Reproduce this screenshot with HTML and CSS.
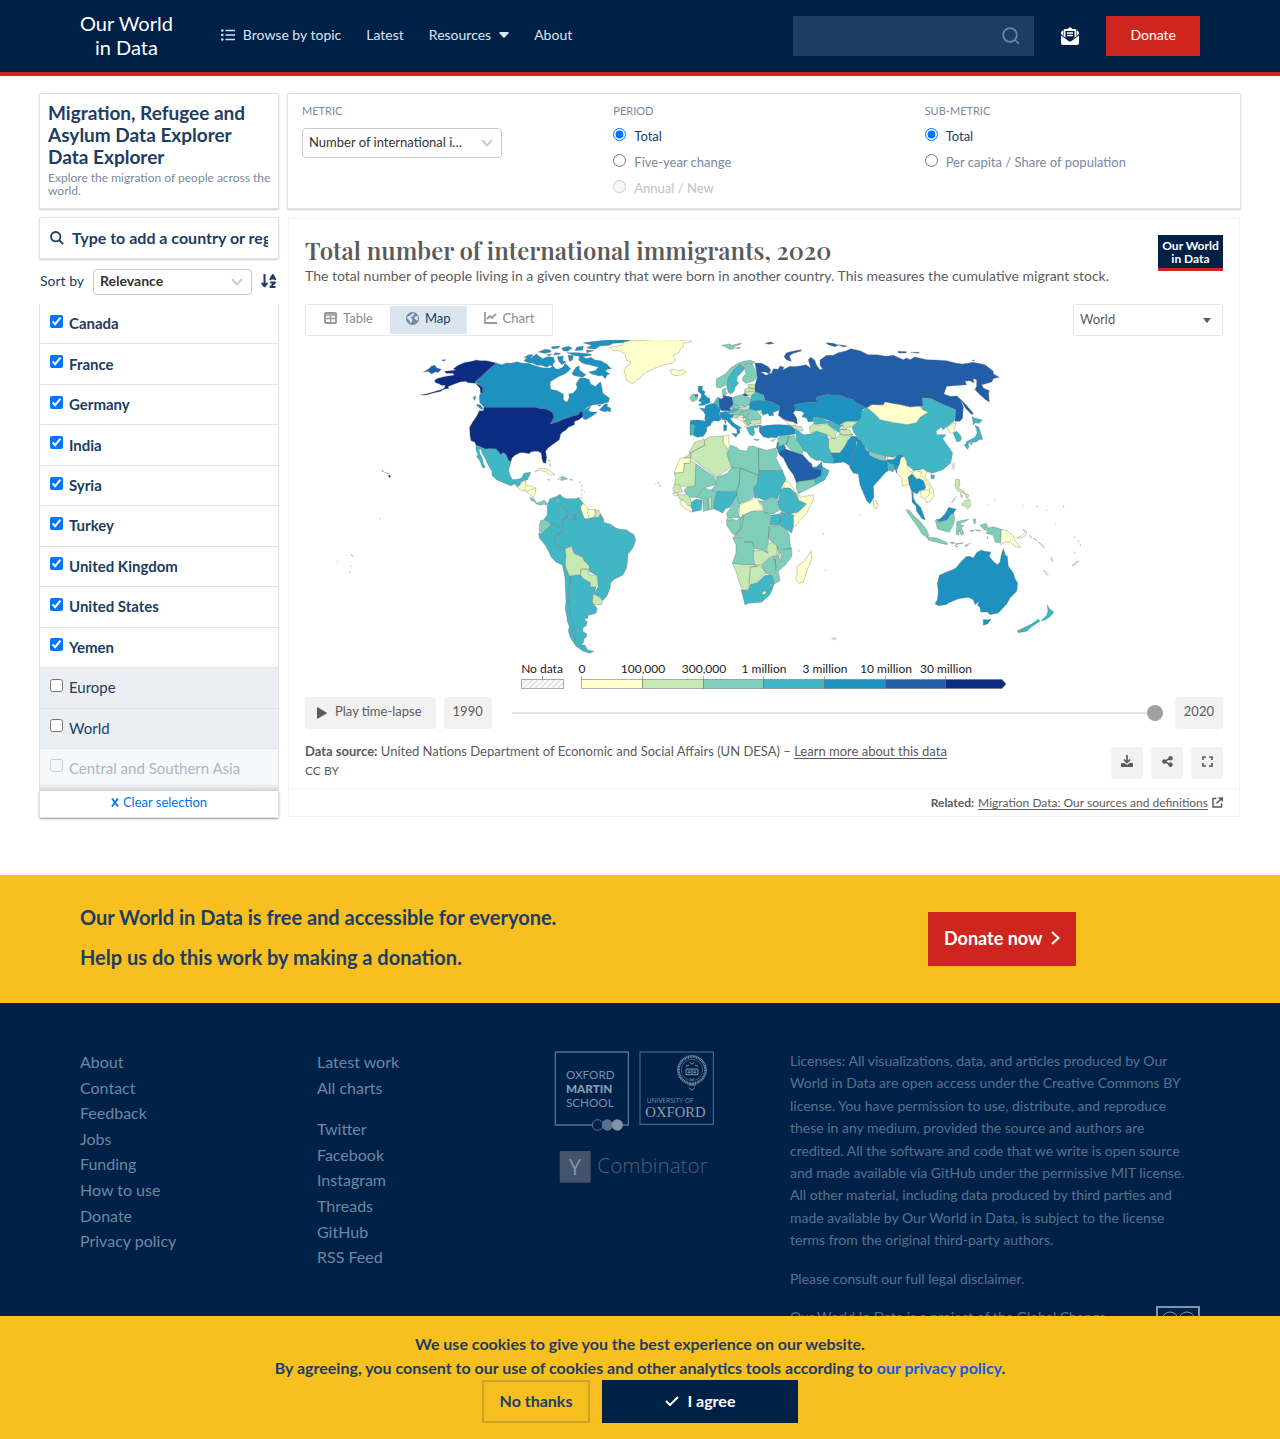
FILE: index.html
```html
<!DOCTYPE html>
<html lang="en">
<head>
<meta charset="utf-8">
<meta name="viewport" content="width=device-width, initial-scale=1">
<title>Migration, Refugee and Asylum Data Explorer - Our World in Data</title>
<link rel="stylesheet" href="styles.css">
</head>
<body>
<header class="site-header">
  <a class="logo" href="#">Our World<br>in Data</a>
  <nav class="site-nav">
    <a href="#"><svg class="ic-list" viewBox="0 0 14 12" width="14" height="12"><g fill="none" stroke="currentColor" stroke-width="2"><path d="M4.500 1.500H14M4.500 6H14M4.500 10.500H14" stroke-width="1.700"/></g><g fill="currentColor"><circle cx="1.300" cy="1.500" r="1.300"/><circle cx="1.300" cy="6" r="1.300"/><circle cx="1.300" cy="10.500" r="1.300"/></g></svg>Browse by topic</a>
    <a href="#">Latest</a>
    <a href="#">Resources<svg class="ic-caret" viewBox="0 0 10 6" width="10" height="6"><path fill="currentColor" d="M1 0H9Q10 .4 9.500 1.200L5.600 5.500Q5 6 4.400 5.500L.5 1.200Q0 .4 1 0Z"/></svg></a>
    <a href="#">About</a>
  </nav>
  <form class="site-search">
    <input type="search" aria-label="Search">
    <svg viewBox="0 0 18 18" width="18" height="18" fill="none" stroke="#6e87a2" stroke-width="1.700"><circle cx="8" cy="8" r="6.800"/><path d="M13 13L17 17"/></svg>
  </form>
  <a class="mail" href="#" aria-label="Newsletter"><svg viewBox="0 0 18 18" width="18" height="18"><path fill="#fff" d="M0 8.500V16Q0 18 2 18H16Q18 18 18 16V8.500L10.500 14Q9 15 7.500 14ZM0 7V6Q0 5 1 4.300L2 3.600V8.500ZM18 7V6Q18 5 17 4.300L16 3.600V8.500ZM2.500 9.200V3.500Q2.500 2 4 2H6.500L9 0L11.500 2H14Q15.500 2 15.500 3.500V9.200L13.500 10.700V4H4.500V10.700Z"/><path stroke="#fff" stroke-width="1.300" d="M6 6H12M6 8.500H12"/></svg></a>
  <a class="donate" href="#">Donate</a>
</header>

<main class="explorer">
  <section class="card heading">
    <h1>Migration, Refugee and Asylum Data Explorer<br>Data Explorer</h1>
    <p>Explore the migration of people across the world.</p>
  </section>

  <section class="card controls">
    <div>
      <label class="cap" for="metric">METRIC</label>
      <span class="select metric"><select id="metric"><option>Number of international immigrants</option></select><svg viewBox="0 0 12 8" width="12" height="8"><path d="M1 1L6 6.500L11 1" fill="none" stroke="#ccc" stroke-width="2"/></svg></span>
    </div>
    <fieldset>
      <legend class="cap">PERIOD</legend>
      <label class="on"><input type="radio" name="period" checked>Total</label>
      <label><input type="radio" name="period">Five-year change</label>
      <label class="off"><input type="radio" name="period" disabled>Annual / New</label>
    </fieldset>
    <fieldset>
      <legend class="cap">SUB-METRIC</legend>
      <label class="on"><input type="radio" name="sub" checked>Total</label>
      <label><input type="radio" name="sub">Per capita / Share of population</label>
    </fieldset>
  </section>

  <aside class="picker">
    <div class="card find">
      <svg viewBox="0 0 14 14" width="14" height="14" fill="none" stroke="#1d3d63" stroke-width="1.800"><circle cx="5.700" cy="5.700" r="4.700"/><path d="M9 9L13.200 13.200"/></svg>
      <input type="text" aria-label="Add a country or region" placeholder="Type to add a country or region...">
    </div>
    <div class="sort">
      <label for="sort">Sort by</label>
      <span class="select relevance"><select id="sort"><option>Relevance</option></select><svg viewBox="0 0 12 8" width="12" height="8"><path d="M1 1L6 6.500L11 1" fill="none" stroke="#ccc" stroke-width="2"/></svg></span>
      <button class="order" aria-label="Sort order"><svg viewBox="0 0 16 14" width="16" height="14" fill="none" stroke="#1d3d63" stroke-width="2" stroke-linejoin="round"><path d="M3.500 0V12M.6 9L3.500 12.300L6.400 9"/><path d="M9 6L11.800 1L14.600 6M10 4.500H13.600"/><path d="M9.200 8.500H14L9.500 13H14.500"/></svg></button>
    </div>
    <ul class="entities">
      <li><label><input type="checkbox" checked>Canada</label></li>
      <li><label><input type="checkbox" checked>France</label></li>
      <li><label><input type="checkbox" checked>Germany</label></li>
      <li><label><input type="checkbox" checked>India</label></li>
      <li><label><input type="checkbox" checked>Syria</label></li>
      <li><label><input type="checkbox" checked>Turkey</label></li>
      <li><label><input type="checkbox" checked>United Kingdom</label></li>
      <li><label><input type="checkbox" checked>United States</label></li>
      <li><label><input type="checkbox" checked>Yemen</label></li>
      <li class="out"><label><input type="checkbox">Europe</label></li>
      <li class="out"><label><input type="checkbox">World</label></li>
      <li class="out faded"><label><input type="checkbox" disabled>Central and Southern Asia</label></li>
    </ul>
    <button class="clear"><svg viewBox="0 0 8 9" width="8" height="9"><path d="M1 .5L7 8.500M7 .5L1 8.500" stroke="currentColor" stroke-width="1.800"/></svg>Clear selection</button>
  </aside>

  <section class="chart">
    <div class="chart-body">
      <div class="chart-head">
        <div>
          <h2>Total number of international immigrants, 2020</h2>
          <p>The total number of people living in a given country that were born in another country. This measures the cumulative migrant stock.</p>
        </div>
        <a class="mini-logo" href="#">Our World<br>in Data</a>
      </div>
      <div class="bar">
        <div class="tabs">
          <button><svg viewBox="0 0 13 12" width="13" height="12"><rect x="1" y="1" width="11" height="10" rx="1" fill="none" stroke="#999" stroke-width="2"/><path d="M1 3H12M1 6.500H12M6.500 3V11" stroke="#999" stroke-width="1.500"/></svg>Table</button>
          <button class="active"><svg viewBox="0 0 14 14" width="13" height="13"><circle cx="7" cy="7" r="7" fill="#6e87a2"/><path fill="#dbe5f0" d="M1.500 4.500L4 4L7 2L6.500 1L9 1.500L8 4L6 5.500L4.500 6L6.500 7L7 9L5.500 11.500L4.500 12L4 9.500L1.500 7ZM9.500 5L12 4L13 7L12 9.500L10.500 8L9 7.500Z"/></svg>Map</button>
          <button><svg viewBox="0 0 13 12" width="13" height="12" fill="none" stroke="#999" stroke-width="1.800"><path d="M1 0V11H13"/><path d="M3 7L6 4L8 6L12 2"/></svg>Chart</button>
        </div>
        <span class="select world"><select aria-label="Region"><option>World</option></select><svg viewBox="0 0 8 5" width="8" height="5"><path d="M0 0H8L4 5Z" fill="#5b5b5b"/></svg></span>
      </div>

      <svg class="map" viewBox="305 340 918 352" role="img" aria-label="World map of international immigrants">
        <defs>
          <pattern id="hatch" width="4" height="4" patternUnits="userSpaceOnUse" patternTransform="rotate(45)"><rect width="4" height="4" fill="#fff"/><path d="M1 0V4" stroke="#ccc"/></pattern>
          <clipPath id="frame"><rect x="305" y="340" width="918" height="320"/></clipPath>
        </defs>
        <g clip-path="url(#frame)" class="land">
          <g transform="translate(320 338) scale(.3333)">
            <path class="c5" d="M310 102L325 94L335 84L345 82L350 90L364 94L355 103L345 102L335 108L325 100ZM365 66L378 65L372 69Z"/>
            <path class="c4" d="M528 75L545 80L560 75L575 76L592 71L606 76L625 76L640 82L660 88L672 90L690 90L700 84L706 92L715 94L728 88L736 76L744 84L752 92L745 100L738 106L725 112L715 116L705 122L692 130L690 138L692 154L712 158L722 164L730 168L730 184L736 192L744 190L748 176L746 168L758 166L768 156L772 148L768 138L776 126L780 120L795 120L808 125L812 138L820 142L826 146L836 136L842 132L846 150L848 165L860 174L868 180L866 192L845 198L820 200L804 206L790 218L800 212L812 204L806 218L815 222L832 222L820 232L798 245L790 242L789 225L785 222L775 230L760 234L735 242L712 252L690 258L697 248L702 236L698 224L682 214L660 212L648 208L492 208L484 198L480 195L478 180L480 168L488 164L486 150L480 142L465 132Z"/>
            <path class="c4" d="M838 215L846 208L854 198L862 198L862 206L872 210L872 222L862 218L855 222ZM780 52L800 62L812 58L825 66L842 68L860 78L874 92L862 94L856 100L870 108L862 110L856 122L846 112L838 114L815 108L806 102L825 98L835 88L815 82L795 78L786 74L776 66ZM612 68L622 58L632 60L650 48L656 54L668 62L682 56L700 58L705 70L698 80L700 86L690 82L680 88L665 82L650 82L640 76L625 74ZM612 58L628 50L640 50L630 60ZM655 42L675 34L690 36L694 42L675 46ZM712 56L730 54L728 68L738 72L726 80L716 70ZM744 52L760 52L758 66L748 70ZM694 26L720 24L715 30L698 33ZM725 30L745 25L757 30L742 40L730 38ZM740 44L772 44L812 48L815 52L785 56L762 52ZM770 28L790 24L788 36L765 38ZM790 14L826 10L866 6L932 6L910 14L880 16L868 22L840 24L825 34L800 30L815 22ZM800 36L822 38L800 44ZM756 106L768 88L778 84L778 96L798 110L788 118L768 114L760 112ZM832 200L845 202L838 205ZM468 200L480 200L490 212L484 214L476 208ZM460 178L468 174L464 188ZM705 44L722 46L716 50L700 50ZM680 50L695 48L688 54Z"/>
            <path class="c6" d="M492 208L648 208L660 212L682 214L698 224L702 236L697 248L690 258L712 252L735 242L760 234L775 230L780 222L788 222L789 236L775 246L764 250L763 260L745 268L738 276L728 282L722 288L718 305L700 318L684 330L677 340L680 358L677 376L670 374L666 362L664 346L655 340L642 340L632 342L628 347L612 344L600 344L585 352L576 360L572 372L564 366L558 350L550 344L542 350L536 342L528 334L510 332L495 333L480 326L468 322L464 312L453 308L450 292L449 268L458 252L470 235L478 218L490 218Z"/>
            <path class="c6" d="M528 75L500 68L480 68L470 66L455 70L432 74L415 82L400 92L407 96L392 98L374 100L378 106L400 106L402 112L385 114L372 116L350 122L344 128L345 133L358 138L364 142L376 142L374 148L368 154L352 158L340 162L318 168L302 171L318 171L340 165L362 160L375 152L386 152L384 146L398 140L420 132L436 130L445 134L465 136L480 142L488 150L488 164L482 166L480 150L470 140L465 132ZM186 398L190 398L189 401ZM196 402L199 403L197 404ZM202 405L206 407L203 408ZM206 411L210 411L212 416L207 419Z"/>
            <path class="c0" d="M870 28L905 22L912 12L930 8L960 8L1000 5L1110 6L1115 12L1090 16L1090 26L1080 35L1078 44L1062 50L1060 58L1066 66L1056 76L1040 78L1010 88L990 98L965 112L960 122L950 124L942 136L932 135L920 128L916 110L912 100L918 86L930 80L932 70L920 68L916 50L900 38L880 38Z"/>
            <path class="c3" d="M468 322L480 326L495 333L510 332L528 332L536 342L542 350L550 344L558 350L566 368L573 374L568 388L566 398L570 412L578 425L592 424L605 420L612 406L632 403L628 414L622 426L608 428L602 432L600 440L592 446L584 438L572 443L550 434L530 425L516 412L516 400L505 382L498 366L486 346L484 334L477 334L480 348L488 362L490 376L496 388L488 390L482 374L476 362L470 358L474 348L468 338Z"/>
            <path class="c0" d="M592 448L602 442L606 430L618 430L616 442L640 446L648 450L645 470L640 478L630 470L618 460L612 458L600 456ZM612 446L618 450L612 458M618 460L626 458L648 450M644 402L655 392L668 391L682 394L705 410L692 412L678 402L660 396ZM682 424L690 425L686 428ZM714 425L724 426L724 418L718 417ZM684 366L692 368L688 370ZM690 376L692 386L688 380Z"/>
            <path class="c2" d="M630 478L642 482L650 494L662 492L672 486L682 496L678 502L672 498L660 502L648 497L642 490L634 488ZM724 416L732 416L743 423L730 426L724 428ZM750 424L758 425L754 428Z"/>
            <path class="c3" d="M720 468L714 478L712 488L716 498L728 506L742 512L740 530L742 540L728 545L730 560L728 572L718 570L710 562L692 556L680 548L672 545L682 530L682 500L690 482L708 476Z"/>
            <path class="c3" d="M714 478L722 470L728 478L740 482L765 482L776 480L790 495L782 504L785 522L765 530L765 545L752 548L742 540L740 530L742 512L728 506L716 498Z"/>
            <path class="c0" d="M790 495L802 508L804 514L825 515L824 538L806 542L795 544L790 535L786 525L782 508ZM804 514L802 526L808 542M776 478L786 480L780 486Z"/>
            <path class="c1" d="M825 515L836 516L842 528L834 540L824 538L828 526Z"/>
            <path class="c2" d="M662 548L672 545L692 556L690 566L676 576L668 587L658 580L658 562Z"/>
            <path class="c3" d="M692 556L710 562L718 570L728 572L726 585L708 590L704 608L712 624L735 632L738 650L736 678L728 682L708 672L694 658L686 640L676 622L658 600L656 585L668 587L676 576L690 566Z"/>
            <path class="c3" d="M728 545L742 540L752 548L765 545L765 530L785 522L790 535L795 544L806 542L824 538L834 540L842 528L852 546L850 553L870 558L888 570L900 574L918 575L942 590L947 606L940 628L924 648L922 672L920 690L908 712L885 722L872 734L870 752L860 775L848 788L840 778L822 768L835 745L832 714L808 700L808 684L792 668L788 657L762 645L755 625L735 632L712 624L704 608L708 590L726 585L728 572L730 560Z"/>
            <path class="c3" d="M750 714L780 710L800 726L812 734L810 746L828 748L822 768L817 792L824 802L832 812L828 826L804 832L804 840L793 843L802 852L798 864L790 868L788 880L800 888L800 896L792 902L790 914L785 920L796 924L780 925L765 905L764 880L755 850L750 820L746 780L745 760L750 735Z"/>
            <path class="c3" d="M728 682L736 678L742 700L750 714L750 735L745 760L746 780L750 820L755 850L764 880L765 905L780 925L795 922L803 936L822 940L810 946L790 940L768 925L752 900L745 880L748 866L742 850L740 830L736 815L738 790L735 720Z"/>
            <path class="c1" d="M735 632L755 625L762 648L788 657L792 668L808 684L806 694L785 692L780 710L755 712L748 714L738 690L736 678L738 650ZM782 694L806 694L808 710L830 712L834 735L828 748L810 746L812 734L790 722L782 712ZM819 768L835 776L848 788L845 800L825 800L817 792Z"/>
            <path class="isle" d="M178 541h4v2h-4zM52 669h2v3h-2zM93 650h4v3h-4zM98 653h3v3h-3zM88 703l4-1v4zM92 685h2v2h-2zM778 431h4v2h-4zM784 442h2v4h-2zM785 453l3 3-4 3zM792 460h2v3h-2zM784 468l4 2-4 2z"/>
          </g>

          <g transform="translate(640 338) scale(.3333)">
            <path class="c5" d="M345 75L365 76L385 86L392 96L388 108L376 102L362 102L378 112L395 105L400 92L415 94L420 84L432 88L428 96L450 85L460 86L480 84L498 80L512 90L505 65L512 58L524 66L530 82L540 95L548 92L540 82L540 66L560 52L580 52L595 44L620 38L632 32L660 38L685 50L710 50L740 55L760 52L790 65L800 60L810 65L824 57L860 65L885 66L920 68L950 76L968 78L1000 73L1035 80L1045 88L1060 100L1060 108L1078 118L1066 120L1060 122L1055 132L1042 136L1025 140L1030 150L1048 158L1046 166L1048 192L1035 184L1020 170L1005 155L1010 145L1010 125L1000 122L1002 135L990 128L975 130L980 140L920 145L912 168L930 175L952 174L960 185L970 205L968 240L960 250L945 250L945 240L947 215L922 205L900 195L875 182L848 180L850 205L810 207L780 200L760 200L735 192L730 200L695 200L680 210L650 195L640 185L620 180L600 172L560 170L528 178L532 192L490 195L462 200L468 215L460 225L470 240L472 258L455 252L430 244L415 232L420 205L395 192L375 187L370 170L345 163L345 142L352 118Z"/>
            <path class="c5" d="M432 55L440 44L465 38L485 35L482 40L460 46L448 54L454 70L440 66ZM948 174L962 184L978 200L1000 226L996 230L978 212L968 196ZM375 16L392 12L402 16L388 19ZM558 14L580 16L595 22L585 26L565 20ZM594 20L622 24L610 27ZM774 40L800 41L798 45L776 45ZM812 43L838 43L835 46ZM306 172L315 165L325 172L315 176ZM996 67L1004 66L1002 69Z"/>
            <path class="c2" d="M228 140L230 122L246 114L258 106L272 90L290 78L310 70L330 67L345 72L336 78L322 76L312 82L298 80L285 92L272 110L265 122L262 138L255 142L240 150L230 148ZM245 22L270 18L275 22L305 15L300 20L285 24L280 34L268 34L258 28ZM285 30L302 28L298 32Z"/>
            <path class="c3" d="M264 162L260 145L265 120L275 105L285 92L298 80L310 84L314 92L304 104L292 116L290 128L296 136L285 148L282 160L272 168Z"/>
            <path class="c2" d="M312 82L322 76L336 78L343 90L352 118L340 130L318 136L308 128L308 118L318 108L314 92ZM152 185L150 178L158 168L172 170L172 184L158 192ZM246 164L248 154L258 150L256 160L262 168L250 172Z"/>
            <path class="c4" d="M175 145L188 144L186 155L196 162L192 168L202 178L210 182L210 194L190 202L174 202L186 194L176 188L184 176L184 168L174 160ZM164 170L172 168L174 176L166 176Z"/>
            <path class="c4" d="M178 210L195 212L196 204L210 198L225 196L242 212L238 228L240 238L244 244L235 250L222 248L214 254L198 250L194 244L196 230L190 220ZM152 247L175 246L198 250L214 254L212 262L200 268L200 280L190 295L172 298L160 292L164 262L150 258Z"/>
            <path class="c3" d="M150 258L166 260L162 290L150 292ZM222 195L232 178L240 180L238 205L228 198ZM260 222L275 212L295 210L295 222L265 226ZM320 270L335 264L356 262L354 268L340 270L345 285L338 295L328 288ZM340 303L358 305L350 308ZM330 185L336 170L350 162L368 170L374 185L355 192L332 190Z"/>
            <path class="c5" d="M237 184L250 180L248 172L276 178L280 200L270 210L272 218L245 218L238 208Z"/>
            <path class="c2" d="M278 178L305 170L328 178L330 200L315 206L290 202L280 198ZM272 206L284 200L302 208L296 214L276 210ZM276 226L296 214L322 216L330 212L350 218L364 236L362 246L335 246L322 250L318 240L310 234L300 232L280 232ZM296 232L304 222L326 216M318 240L324 228L332 222"/>
            <path class="c1" d="M324 140L345 138L345 150L338 152L326 150ZM314 154L326 150L345 152L345 162L338 170L330 174L314 166ZM314 162L342 160M298 208L322 206L328 212L310 216ZM330 248L362 244L364 256L340 260L332 256ZM354 214L366 216L364 228ZM278 232L296 230L296 236L284 238L290 244ZM392 308L406 303L402 310Z"/>
            <path class="c0" d="M288 238L308 238L312 250L300 248ZM310 252L320 250L322 270L314 268L316 260ZM320 264L332 256L334 262ZM90 97L100 94L115 98L130 94L138 102L125 110L105 113L95 108ZM434 248L462 252L468 262L448 262Z"/>
            <path class="c2" d="M312 250L318 242L330 248L332 258L324 262ZM308 240L312 234L318 240Z"/>
            <path class="c4" d="M240 224L258 220L264 226L280 230L278 240L270 238L276 250L285 258L305 270L298 272L300 284L292 290L290 274L276 264L260 246L248 245L240 238ZM275 286L293 288L288 298ZM251 260L261 262L259 278L251 278ZM253 248L259 248L257 258Z"/>
            <path class="c4" d="M328 200L332 190L375 187L395 192L420 205L418 216L398 224L402 232L388 234L384 226L368 232L365 215L350 218L328 212Z"/>
            <path class="c4" d="M358 268L370 264L385 262L402 260L420 260L450 262L465 272L465 288L440 292L415 294L410 300L395 298L385 300L370 296L358 282ZM354 262L366 262L360 268Z"/>
            <path class="c1" d="M455 264L466 264L485 266L490 278L480 280L470 272L466 276Z"/>
            <path class="c4" d="M462 200L490 195L532 192L528 178L560 170L600 172L620 180L640 185L650 195L680 210L668 214L664 226L665 238L655 250L620 250L598 262L575 250L545 240L520 236L520 250L505 252L500 240L486 236L492 226L485 220L468 218Z"/>
            <path class="c3" d="M520 236L545 240L560 248L575 250L598 262L616 262L600 268L598 284L585 276L570 265L560 256L540 258L522 260Z"/>
            <path class="c1" d="M508 266L522 258L540 262L545 256L562 260L590 284L585 302L576 300L560 290L530 280L512 285ZM606 256L620 250L655 252L640 264L620 270L616 276L602 274L612 268ZM600 274L628 274L638 290L612 292L600 288ZM565 305L576 300L585 302L600 288L612 292L638 290L622 302L622 314L615 325L600 345L572 345L565 325Z"/>
            <path class="c3" d="M465 272L480 282L490 290L512 288L530 280L560 290L566 302L565 325L572 345L582 365L580 376L552 374L540 366L530 368L512 358L500 342L490 338L480 320L470 305Z"/>
            <path class="c4" d="M572 345L600 345L615 325L625 305L636 294L652 296L656 305L648 312L650 325L636 350L640 372L628 382L612 372L580 376L582 365Z"/>
            <path class="c4" d="M652 300L668 312L678 335L688 342L690 352L720 366L738 368L744 364L762 364L775 348L790 352L788 362L778 380L770 405L762 385L742 372L745 398L735 405L722 420L700 445L702 478L690 497L680 488L660 440L655 408L640 405L630 390L628 382L640 372L636 350L650 325Z"/>
            <path class="c1" d="M192 303L165 312L158 325L148 340L146 352L130 360L152 360L152 344L194 322ZM194 305L210 296L250 294L250 315L262 332L262 350L275 385L230 418L166 370L152 358L152 344L194 322ZM102 405L130 403L134 376L150 376L150 364L168 378L165 445L120 445L103 440L108 420Z"/>
            <path class="c0" d="M120 360L152 360L150 375L132 376L130 403L102 405L110 385ZM250 294L268 292L265 308L270 325L262 333L250 315Z"/>
            <path class="c2" d="M265 335L272 322L290 328L298 336L320 340L325 326L338 324L355 330L357 412L300 390L275 388L262 350ZM355 330L380 337L408 330L412 350L408 360L418 380L428 398L357 398ZM168 378L225 418L228 440L190 450L178 468L170 478L145 478L132 458L140 448L165 445ZM230 418L262 406L275 388L300 392L298 435L290 458L260 462L228 460L212 458L228 440ZM300 390L355 412L352 436L342 450L344 475L330 485L298 498L290 480L290 458L298 435Z"/>
            <path class="c3" d="M357 398L428 398L438 425L428 440L422 460L412 484L394 478L375 488L358 480L345 482L342 450L352 436ZM430 450L450 450L466 462L475 482L500 498L475 522L450 528L425 520L412 500L418 475L424 455ZM422 522L450 528L462 532L460 565L455 585L440 575L418 560ZM395 532L418 527L424 545L415 562L390 562ZM222 490L230 460L260 462L290 460L292 470L280 488L270 508L256 512L248 525L222 512ZM152 494L168 484L186 486L184 516L156 522Z"/>
            <path class="c0" d="M432 432L445 430L455 445L472 465L466 464L450 450L432 450ZM472 468L480 478L520 470L520 486L500 525L462 568L460 535L475 522L500 498L475 486ZM298 502L330 488L352 478L360 500L370 518L352 516L330 524L308 532L298 524ZM120 488L135 485L158 515L155 523L135 512L122 500ZM98 466L116 466L112 474L102 472Z"/>
            <path class="c2" d="M356 488L375 490L394 480L412 486L420 515L400 528L375 525L368 505ZM290 470L298 500L294 520L300 540L262 538L260 526L272 510L280 488ZM170 478L180 465L192 450L212 456L228 462L224 474L222 512L190 520L188 484ZM200 478L206 514M260 545L278 543L290 548L300 540L312 532L305 570L290 590L278 588L260 562ZM300 545L308 532L335 520L370 520L395 532L388 565L385 600L386 612L378 635L384 645L365 635L345 632L338 612L315 612L300 595L282 595L290 585L302 572ZM278 598L300 597L312 612L338 612L343 635L345 680L310 680L277 676L288 645L288 620ZM388 566L418 562L440 575L448 590L452 632L415 635L408 618L395 612L385 600ZM415 638L455 630L456 655L435 682L415 700L420 728L402 738L396 710L408 690L405 665L394 658L412 652L424 672L424 650ZM365 682L388 660L406 665L408 690L390 712L372 702Z"/>
            <path class="c1" d="M98 450L108 438L118 440L128 462L102 464ZM112 470L145 470L152 485L155 500L145 504L132 488L118 482ZM205 482L214 476L214 514L208 514ZM262 540L274 540L274 546L262 546ZM340 640L345 638L365 637L384 645L380 622L395 612L410 622L412 650L385 660L365 680L345 682L340 665ZM412 625L418 645L424 668L416 662ZM277 676L310 680L345 680L352 686L330 687L326 755L310 758L300 740L290 706ZM332 688L360 682L378 705L358 722L346 736L335 742L328 735Z"/>
            <path class="c3" d="M303 755L325 758L330 740L350 735L375 712L396 712L402 740L390 770L365 792L325 796L315 800L310 780Z"/>
            <path class="c0" d="M366 766L374 758L379 764L371 770ZM389 738L396 740L394 747ZM512 640L516 662L504 690L490 732L475 736L468 722L472 705L470 685L492 670Z"/>
            <path class="c5" d="M415 338L430 330L450 338L488 350L510 375L520 390L545 395L545 412L525 424L500 430L480 430L470 435L460 410L445 390L430 360L418 350Z"/>
            <path class="c2" d="M470 435L480 430L525 424L528 440L500 455L475 467L468 445ZM445 296L462 292L472 310L490 335L486 350L455 338L438 322ZM414 300L422 294L450 293L440 318L420 326L414 320Z"/>
            <path class="c3" d="M545 385L568 398L555 425L528 440L525 424L545 412Z"/>
            <path class="c4" d="M515 388L530 386L545 372L547 394L520 393ZM412 328L432 320L438 330L426 338L414 345ZM412 312L416 314L414 336L409 330ZM510 372L517 378L514 384Z"/>
            <path class="isle" d="M52 432l6 2-4 3zM58 440l5 3-6 3zM44 437h5v1h-5zM244 551l3 1-2 3zM474 636l6 4-6-1zM548 586h3v3h-3zM556 696l3 1-3 3zM574 902l10-4 6 4-8 4zM661 528h1v4h-1z"/>
          </g>

          <g transform="translate(860 338) scale(.3333)">
            <path class="c3" d="M5 220L20 210L30 215L50 235L60 245L100 255L140 258L168 254L180 238L205 224L190 216L180 212L190 205L185 182L215 182L240 195L262 205L285 215L287 240L280 252L262 265L248 275L244 266L228 280L230 290L258 290L248 302L262 322L278 345L272 375L248 395L225 403L216 406L200 400L190 392L178 396L160 398L150 388L142 382L132 358L122 348L100 358L78 355L27 340L10 320L0 305L-20 282L-24 268L-5 250L4 236ZM212 410L224 412L222 422L214 422Z"/>
            <path class="c0" d="M22 210L35 200L70 202L75 192L120 200L150 207L178 205L190 216L205 222L180 238L170 254L140 260L100 253L60 245L50 232L34 220ZM260 268L278 258L288 255L282 275L286 284L270 285L266 276ZM82 356L100 358L98 365L83 364ZM40 486L50 490L54 502L50 512L42 508ZM132 355L140 370L142 388L150 400L158 402L148 415L150 440L155 450L158 480L154 466L148 440L138 442L128 444L124 420L112 405L110 395L118 380L122 360ZM158 404L165 396L178 396L190 392L202 402L194 414L205 430L220 455L222 475L210 490L198 494L195 482L184 478L180 458L195 452L198 442L188 428L178 422L170 424Z"/>
            <path class="border" d="M166 398L184 402L182 412L194 424L210 448L208 470L196 482M182 460L208 454"/>
            <path class="c2" d="M27 340L50 348L78 355L78 368L50 362L27 352Z"/>
            <path class="c3" d="M80 370L90 376L102 378L105 392L98 402L86 396ZM280 285L290 280L300 290L305 302L300 310L290 311ZM336 236L345 240L367 246L358 256L345 254L340 262ZM345 262L357 268L362 285L368 304L356 305L350 312L335 312L320 318L318 312L345 298L352 284ZM312 320L324 316L327 328L322 334ZM330 316L340 314L334 321Z"/>
            <path class="c4" d="M144 418L156 408L170 424L178 422L190 428L197 448L194 454L178 458L172 468L160 462L160 480L168 494L182 508L196 545L186 542L170 520L168 505L156 492L157 462L148 440ZM228 545L240 543L255 528L266 508L288 514L280 526L262 545L240 552Z"/>
            <path class="c2" d="M138 515L150 518L160 532L182 552L200 575L206 590L204 600L186 588L172 565L158 545L145 528ZM202 598L230 600L262 614L262 620L235 614L205 606ZM226 546L240 552L262 545L272 528L282 526L284 548L278 565L268 582L255 580L232 572ZM290 552L302 548L326 544L318 550L300 556L302 562L312 562L304 570L312 588L304 592L298 576L296 592L288 588L290 570ZM340 544L346 542L348 554L342 558ZM330 577L342 577L336 581ZM345 575L362 577L358 580ZM270 614L284 612L280 618ZM286 617L310 615L290 620ZM314 624L326 618L320 625ZM360 562L378 556L386 570L400 566L424 574L422 614L405 612L400 592L378 586L384 578L372 575ZM380 598L384 596L382 602ZM284 622L294 625L290 627Z"/>
            <path class="c1" d="M286 424L298 424L300 438L296 450L306 456L316 464L310 466L292 458L286 445ZM300 466L310 474L304 480ZM314 466L326 470L324 482L318 478ZM306 498L314 488L330 484L332 504L322 514L314 502L308 504ZM274 494L288 476L280 490Z"/>
            <path class="c0" d="M424 574L442 578L460 594L465 608L482 628L466 626L450 612L436 612L422 620ZM470 600L484 594L496 582L488 574L500 580L496 594L480 601ZM508 592L516 598L512 600ZM520 600L532 608L528 608ZM536 612L550 622L552 630L542 620ZM551 696L565 710L560 712ZM574 658L579 670L576 670ZM636 682L648 674L644 682ZM648 672L656 668L652 673ZM260 522L264 516L262 524Z"/>
            <path class="c4" d="M430 632L436 650L442 655L445 685L460 705L465 722L473 735L470 760L450 780L440 798L415 825L390 830L382 822L362 822L360 808L352 802L358 790L345 800L340 785L325 778L295 782L265 795L258 800L235 803L225 797L232 785L235 760L232 738L238 712L255 704L285 692L305 670L318 656L330 655L340 660L350 644L364 636L372 640L392 642L388 656L402 672L412 680L420 672L424 650ZM370 844L382 846L393 843L384 857L370 862Z"/>
            <path class="c3" d="M562 800L568 812L582 822L570 836L556 846L544 848L560 832L564 820ZM535 843L540 850L515 866L500 880L475 884L472 878L490 870L515 858Z"/>
            <path class="isle" d="M276 380l6-5 3 8-4 14-5-6zM382 501h2v2h-2zM403 486h2v2h-2zM489 502h2v2h-2zM529 504h3v3h-3zM560 516h2v2h-2zM610 503h2v5h-2zM586 559h2v2h-2zM642 595l3 4-2 0zM654 608h3v3h-3zM660 620h3v3h-3zM642 642h3v2h-3zM316 622l18-8-12 7z"/>
          </g>
        </g>
        <g class="key">
          <text x="542" y="673">No data</text>
          <text x="582" y="673">0</text>
          <text x="643" y="673">100,000</text>
          <text x="704" y="673">300,000</text>
          <text x="764" y="673">1 million</text>
          <text x="825" y="673">3 million</text>
          <text x="886" y="673">10 million</text>
          <text x="946" y="673">30 million</text>
          <rect x="521.500" y="679.500" width="42" height="9" fill="url(#hatch)" stroke="#aaa"/>
          <path d="M542.500 676V679" stroke="#999"/>
          <g stroke="#666" stroke-opacity=".5">
            <rect class="c0" x="581.500" y="679.500" width="61" height="9"/>
            <rect class="c1" x="642.500" y="679.500" width="61" height="9"/>
            <rect class="c2" x="703.500" y="679.500" width="60" height="9"/>
            <rect class="c3" x="763.500" y="679.500" width="61" height="9"/>
            <rect class="c4" x="824.500" y="679.500" width="61" height="9"/>
            <rect class="c5" x="885.500" y="679.500" width="60" height="9"/>
            <path class="c6" d="M945.500 679.500H1002L1006 684L1002 688.500H945.500Z"/>
            <path d="M581.500 676V679M642.500 676V679M703.500 676V679M763.500 676V679M824.500 676V679M885.500 676V679M945.500 676V679"/>
          </g>
        </g>
      </svg>

      <div class="timeline">
        <button class="play"><svg viewBox="0 0 10 12" width="10" height="12"><path d="M0 1Q0 0 1 .4L9.500 5.400Q10 6 9.500 6.600L1 11.600Q0 12 0 11Z" fill="#5b5b5b"/></svg>Play time-lapse</button>
        <button>1990</button>
        <input type="range" min="1990" max="2020" value="2020" aria-label="Year">
        <button>2020</button>
      </div>

      <div class="sources">
        <p><b>Data source:</b> United Nations Department of Economic and Social Affairs (UN DESA) – <a href="#">Learn more about this data</a><br><span class="cc">CC BY</span></p>
        <div class="actions">
          <button aria-label="Download"><svg viewBox="0 0 12 12" width="12" height="12"><path d="M6 0V7M3 4.500L6 7.500L9 4.500" fill="none" stroke="#5b5b5b" stroke-width="1.700"/><path d="M1 8H3.500L6 10L8.500 8H11Q12 8 12 9V11Q12 12 11 12H1Q0 12 0 11V9Q0 8 1 8Z" fill="#5b5b5b"/></svg></button>
          <button aria-label="Share"><svg viewBox="0 0 11 11" width="11" height="11"><g fill="#5b5b5b"><circle cx="2.300" cy="5.500" r="2.200"/><circle cx="8.500" cy="2.200" r="2.200"/><circle cx="8.500" cy="8.800" r="2.200"/></g><path d="M8.500 2.200L2.300 5.500L8.500 8.800" fill="none" stroke="#5b5b5b" stroke-width="1.500"/></svg></button>
          <button aria-label="Full screen"><svg viewBox="0 0 11 11" width="11" height="11"><path d="M1 4V1H4M7 1H10V4M10 7V10H7M4 10H1V7" fill="none" stroke="#5b5b5b" stroke-width="1.700"/></svg></button>
        </div>
      </div>
    </div>
    <p class="related"><b>Related:</b> <a href="#">Migration Data: Our sources and definitions</a><svg viewBox="0 0 11 11" width="11" height="11" fill="none" stroke="#5b5b5b" stroke-width="1.500"><path d="M4.500 1.500H1V10H9.500V6.500M6.500 1H10.200V4.500M10 1L4.500 6.500"/></svg></p>
  </section>
</main>

<section class="appeal">
  <p>Our World in Data is free and accessible for everyone.<br>Help us do this work by making a donation.</p>
  <div><a href="#">Donate now<svg viewBox="0 0 9 14" width="9" height="14"><path d="M1 1L7.500 7L1 13" fill="none" stroke="#fff" stroke-width="2"/></svg></a></div>
</section>

<footer class="site-footer">
  <ul>
    <li><a href="#">About</a></li>
    <li><a href="#">Contact</a></li>
    <li><a href="#">Feedback</a></li>
    <li><a href="#">Jobs</a></li>
    <li><a href="#">Funding</a></li>
    <li><a href="#">How to use</a></li>
    <li><a href="#">Donate</a></li>
    <li><a href="#">Privacy policy</a></li>
  </ul>
  <div>
    <ul>
      <li><a href="#">Latest work</a></li>
      <li><a href="#">All charts</a></li>
    </ul>
    <ul>
      <li><a href="#">Twitter</a></li>
      <li><a href="#">Facebook</a></li>
      <li><a href="#">Instagram</a></li>
      <li><a href="#">Threads</a></li>
      <li><a href="#">GitHub</a></li>
      <li><a href="#">RSS Feed</a></li>
    </ul>
  </div>
  <svg class="partners" viewBox="42 36 480 399" width="160" height="133">
    <g fill="none" stroke="#577291" stroke-width="4">
      <path d="M156 258H46V39H265V258H248"/>
      <rect x="300" y="39" width="220" height="217" stroke-width="3"/>
      <circle cx="173" cy="258" r="16" stroke-width="3"/>
      <g stroke="#7f92a8"><circle cx="456" cy="93" r="40" stroke-width="7" stroke-dasharray="3 2"/><circle cx="456" cy="93" r="44" stroke-width="1.500"/><circle cx="456" cy="93" r="32" stroke-width="1.500"/><path stroke-width="3" d="M438 90H474V107H438ZM456 90V107M443 96H452M460 96H469M443 101H452M460 101H469M437 82L447 78M465 78L475 82M450 70L456 76L462 70M450 118L456 124L462 118M448 146L455 154L464 146M446 138H468"/></g>
    </g>
    <circle cx="202" cy="258" r="17" fill="#577291"/><circle cx="232" cy="258" r="17" fill="#8093a8"/>
    <g font-family="Lato, sans-serif" font-size="35" fill="#7d90a6">
      <text x="78" y="121">OXFORD</text>
      <text x="78" y="163" font-weight="900" fill="#8b9cb0">MARTIN</text>
      <text x="78" y="205">SCHOOL</text>
    </g>
    <text x="320" y="193" font-family="Open Sans, sans-serif" font-size="20" fill="#7d90a6">UNIVERSITY OF</text>
    <text x="316" y="234" font-family="Liberation Serif, serif" font-size="44" fill="#8b9cb0">OXFORD</text>
    <rect x="59" y="336" width="93" height="95" fill="#43536a"/>
    <g font-family="Open Sans, sans-serif"><text x="86" y="408" font-size="66" fill="#8093a8">Y</text><text x="172" y="403" font-size="62" font-weight="300" fill="#4f5f75">Combinator</text></g>
  </svg>
  <div class="legal">
    <p>Licenses: All visualizations, data, and articles produced by Our World in Data are open access under the Creative Commons BY license. You have permission to use, distribute, and reproduce these in any medium, provided the source and authors are credited. All the software and code that we write is open source and made available via GitHub under the permissive MIT license. All other material, including data produced by third parties and made available by Our World in Data, is subject to the license terms from the original third-party authors.</p>
    <p>Please consult our full legal disclaimer.</p>
    <div class="gcdl"><p>Our World In Data is a project of the Global Change Data Lab.</p><svg viewBox="0 0 44 44" width="44" height="44" fill="none" stroke="#8093a8"><rect x="1" y="1" width="42" height="42" stroke-width="2"/><circle cx="14" cy="14" r="8"/><circle cx="31" cy="14" r="8"/><circle cx="14" cy="31" r="8"/><circle cx="31" cy="31" r="8"/></svg></div>
  </div>
</footer>

<div class="cookies" role="dialog" aria-label="Cookie notice">
  <p>We use cookies to give you the best experience on our website.<br>By agreeing, you consent to our use of cookies and other analytics tools according to <a href="#">our privacy policy</a>.</p>
  <div>
    <button class="no">No thanks</button>
    <button class="yes"><svg viewBox="0 0 14 10" width="14" height="10"><path d="M1 5L5 9L13 1" fill="none" stroke="#fff" stroke-width="2"/></svg>I agree</button>
  </div>
</div>
</body>
</html>
```
FILE: styles.css
```css
*{box-sizing:border-box}
html{background:#fff}
body{margin:0;min-height:100vh;display:flex;flex-direction:column;font-family:Lato,"Liberation Sans",sans-serif;font-size:14px;color:#5b5b5b}
h1,h2,p,ul,fieldset{margin:0;padding:0}
ul{list-style:none}
fieldset{border:0;min-width:0}
button,input,select{font:inherit;color:inherit}
button{cursor:pointer;border:0;background:none;padding:0}
svg{display:block;flex:none}

.site-header{display:flex;align-items:center;height:76px;padding:0 80px;background:#002147;border-bottom:4px solid #ce261e;color:#dbe5f0}
.site-header a{color:inherit;text-decoration:none}
.site-header .logo{color:#fff;font-size:20px;line-height:24px;text-align:center;margin-right:48px;padding-bottom:2px}
.site-nav{display:flex;gap:25px;flex:1;padding-bottom:2px}
.site-nav a{display:flex;align-items:center;gap:8px;line-height:20px}
.site-search{display:flex;align-items:center;width:241px;height:40px;padding-right:14px;background:#1d3d63}
.site-search input{flex:1;min-width:0;height:40px;border:0;background:none;outline:0;padding:0 12px}
.site-header .mail{margin:0 27px}
.site-header .donate{background:#ce261e;color:#fff;line-height:38px;padding:0 24px 2px}

.explorer{display:grid;grid-template-columns:240px 1fr;gap:8px;padding:17px 39px 57px}
.card{background:#fff;border:1px solid #e3e3e3;border-radius:2px;box-shadow:0 1px 2px rgba(0,0,0,.2)}
.heading{padding:8px 8px 11px}
.heading h1{font-size:19px;line-height:22px;font-weight:700;color:#1d3d63}
.heading p{font-size:12px;line-height:13px;margin-top:3px;color:#7a899e;margin-right:-4px}
.controls{display:grid;grid-template-columns:repeat(3,1fr);padding:9px 4px 0 14px;color:#7a899e;font-size:13px}
.cap{display:block;font-size:11px;line-height:16px;padding:0;margin-bottom:4px;color:#7a899e}
.controls fieldset label{display:flex;align-items:center;gap:8px;height:26px;line-height:26px}
.controls input{margin:0 0 4px;width:13px;height:13px}
.controls .on{color:#1d3d63}
.controls .off{color:#bcc3cd}
.select{display:flex;position:relative;align-items:center;border:1px solid #ccc;border-radius:4px;background:#fff;color:#333}
.select select{appearance:none;width:100%;height:100%;border:0;background:none;padding:0 32px 0 6px;text-overflow:ellipsis;outline:0}
.select svg{position:absolute;right:8px;pointer-events:none}
.metric{width:200px;height:30px;margin-top:9px}
.metric select{padding-bottom:3px}

.picker{display:flex;flex-direction:column;color:#1d3d63}
.find{display:flex;align-items:center;gap:8px;height:42px;padding:0 10px;margin-bottom:10px}
.find input{flex:1;min-width:0;border:0;padding:0 0 2px;outline:0;background:none;font-size:16px;font-weight:700}
.find input::placeholder{color:#1d3d63;opacity:1}
.sort{display:flex;align-items:center;gap:9px;margin-bottom:9px;padding-left:1px}
.sort label{padding-bottom:3px}
.relevance{flex:1;height:26px;font-weight:700}
.relevance select{padding-bottom:3px}
.order{width:18px;padding-bottom:2px}
.entities{flex:1;display:flex;flex-direction:column;border:1px solid #e3e3e3;border-top:0;border-bottom:0}
.entities li{flex:1;border-bottom:1px solid #dbe5f0;font-size:15px;font-weight:700;display:flex}
.entities label{display:flex;align-items:center;gap:6px;flex:1;padding:0 0 1px 10px}
.entities input{margin:0 0 4px;width:13px;height:13px}
.entities .out{background:#ebeef2;font-weight:400}
.entities .faded{flex:none;height:42px;padding-bottom:3px;background:linear-gradient(#f7f8fa 82%,#d2d5da);color:#abb6c5;border-bottom:0}
.clear{display:flex;justify-content:center;align-items:center;gap:4px;height:27px;font-size:13px;color:#0073e6;border:1px solid #e3e3e3;border-top:0;box-shadow:0 1px 2px rgba(0,0,0,.4);border-radius:0 0 2px 2px;padding-bottom:4px}

.chart{margin:1px;border:1px solid #f2f2f2;min-width:0}
.chart-body{padding:16px 16px 8px}
.chart-head{display:flex;justify-content:space-between;align-items:flex-start;margin-bottom:17px}
.chart-head h2{font-family:"Playfair Display","Liberation Serif",serif;font-size:24px;font-weight:600;line-height:30px}
.chart-head p{line-height:22px}
.mini-logo{background:#002147;border-bottom:3px solid #ce261e;color:#fff;text-decoration:none;font-size:12px;font-weight:700;line-height:13px;width:65px;height:36px;padding-top:4px;text-align:center;flex:none}
.bar{display:flex;justify-content:space-between;font-size:13px}
.tabs{display:flex;border:1px solid #e7e7e7;border-radius:2px;padding:1px;height:32px}
.tabs button{display:flex;align-items:center;gap:6px;padding:0 17px 4px;color:#8a8a8a}
.tabs .active{background:#dbe5f0;color:#1d3d63;border-radius:2px;padding:0 16px 4px}
.world{width:150px;height:32px;border-color:#e7e7e7;border-radius:2px;color:#5b5b5b}
.world select{padding-bottom:3px}
.world svg{right:11px}
.map{width:100%;height:auto;margin-top:4px}
.land path{stroke:#6b6b6b;stroke-width:1}
.c0{fill:#ffffcc}.c1{fill:#c7e9b4}.c2{fill:#7fcdbb}.c3{fill:#41b6c4}.c4{fill:#1d91c0}.c5{fill:#225ea8}.c6{fill:#0c2c84}
.land .isle{fill:#ddd;stroke:#aaa}
.land .border{fill:none}
.key text{font-size:12px;fill:#222;text-anchor:middle}
.timeline{display:flex;gap:8px;margin-top:5px;font-size:13px}
.timeline button{height:32px;padding:0 9px 4px;background:#f2f2f2;border-radius:4px}
.timeline .play{display:flex;align-items:center;gap:8px;padding:0 14px 4px 12px}
.play svg{margin-top:4px}
.timeline input{flex:1;min-width:0;appearance:none;height:32px;margin:0 4px 0 12px;background:linear-gradient(#e5e5e5,#e5e5e5) center/100% 2px no-repeat}
.timeline input::-webkit-slider-thumb{appearance:none;width:16px;height:16px;border-radius:50%;background:#a1a1a1}
.sources{display:flex;justify-content:space-between;margin-top:13px;font-size:13px;line-height:19px}
.sources a,.related a{color:inherit;text-underline-offset:2px}
.cc{font-size:12px}
.actions{display:flex;gap:8px;margin-top:5px}
.actions button{width:32px;height:32px;display:flex;justify-content:center;align-items:center;padding-bottom:4px;background:#f2f2f2;border-radius:4px}
.related{display:flex;align-items:center;justify-content:flex-end;gap:4px;border-top:1px solid #f2f2f2;padding:0 16px;font-size:12px;line-height:27px}

.appeal{display:flex;align-items:center;background:#f7c020;color:#1d3d63;padding:24px 80px;font-size:20px;line-height:40px;font-weight:700}
.appeal p{flex:1;padding-bottom:2px;margin-top:-2px}
.appeal div{width:272px}
.appeal a{display:inline-flex;align-items:center;gap:9px;background:#ce261e;color:#fff;text-decoration:none;font-size:18px;line-height:52px;padding:0 16px 2px}

.site-footer{flex:1;display:grid;grid-template-columns:213px 213px 212px 1fr;gap:24px;padding:46px 80px 0;background:#002147;color:#6e87a2;font-size:16px;line-height:1.6}
.site-footer a{color:inherit;text-decoration:none}
.site-footer ul+ul{margin-top:16px}
.partners{margin-top:2px}
.legal{font-size:14px;color:#577291;padding-top:1px}
.legal p{margin-bottom:16px}
.gcdl{display:flex;gap:24px;height:70px}
.gcdl p{flex:1}

.cookies{position:fixed;left:0;right:0;bottom:0;background:#f7c020;color:#1d3d63;text-align:center;padding:16px;font-size:16px;line-height:24px;font-weight:700}
.cookies a{color:#0e5ce3;text-decoration:none}
.cookies div{display:flex;justify-content:center;gap:12px}
.cookies button{height:43px;padding-bottom:2px}
.cookies .no{border:2px solid #c8a42c;padding:0 16px 2px}
.yes{display:flex;align-items:center;justify-content:center;gap:8px;width:196px;background:#002147;color:#fff}
```
